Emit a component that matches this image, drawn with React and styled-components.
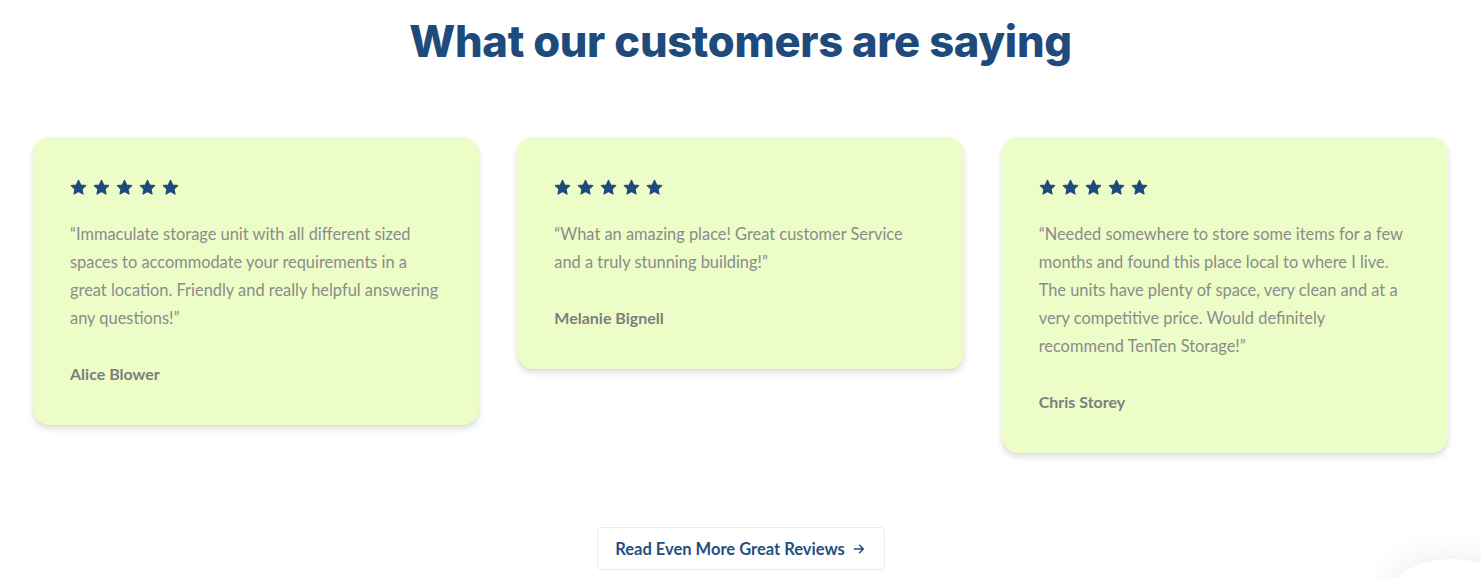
import styled, { createGlobalStyle } from "styled-components"

const GlobalStyle = createGlobalStyle`
    html, body {
        margin: 0;
        padding: 0;
        background: #ffffff;
    }
    body {
        font-family: Lato, "Open Sans", sans-serif;
        overflow: hidden;
    }
`

const Section = styled.section`
    width: 100%;
    height: 579px;
    display: flex;
    flex-direction: column;
    align-items: center;
    padding-top: 14px;
    box-sizing: border-box;
    position: relative;
    overflow: hidden;
`

const Title = styled.h2`
    margin: 0;
    font-family: Inter, "Open Sans", sans-serif;
    font-weight: 800;
    font-size: 43.5px;
    line-height: 54px;
    letter-spacing: -0.3px;
    color: #1e4b7b;
`

const Cards = styled.div`
    width: 100%;
    box-sizing: border-box;
    padding: 0 33px;
    margin-top: 69px;
    display: grid;
    grid-template-columns: repeat(3, 1fr);
    gap: 38px;
    align-items: start;
`

const Card = styled.div`
    background: #edfdc7;
    border-radius: 16px;
    padding: 41px 37px 37px;
    box-shadow: 0 4px 6px rgba(0, 0, 0, 0.12), 0 1px 2px rgba(0, 0, 0, 0.05);
`

const Stars = styled.div`
    display: flex;
    gap: 6px;
    height: 18px;
    align-items: center;
`

const Quote = styled.p`
    margin: 24px 0 0;
    font-size: 16.4px;
    line-height: 28px;
    color: #8b8b8b;
`

const Line = styled.span`
    display: block;
    white-space: nowrap;
`

const Name = styled.div`
    margin-top: 28px;
    font-size: 16px;
    line-height: 28px;
    font-weight: 700;
    color: #7e7e7e;
`

const Button = styled.a`
    margin-top: 74px;
    width: 288px;
    height: 43px;
    box-sizing: border-box;
    border: 1px solid #ebebeb;
    border-radius: 4px;
    display: flex;
    align-items: center;
    justify-content: center;
    gap: 7px;
    font-size: 16.5px;
    font-weight: 700;
    color: #24507f;
    text-decoration: none;
    cursor: pointer;
`

// chat launcher peeking in from the bottom-right corner
const Widget = styled.div`
    position: absolute;
    right: -30px;
    bottom: -50px;
    width: 120px;
    height: 70px;
    border-radius: 50%;
    box-shadow: 0 0 36px rgba(0, 0, 0, 0.09);
    background: #ffffff;
`

const Star = () => (
    <svg width="17" height="17" viewBox="0 0 24 24">
        <path
            d="M12 1.8l3.1 6.6 7.1.9-5.2 4.9 1.4 7.1L12 17.8l-6.4 3.5 1.4-7.1-5.2-4.9 7.1-.9z"
            fill="#1e4a7c"
            stroke="#1e4a7c"
            strokeWidth="1.6"
            strokeLinejoin="round"
        />
    </svg>
)

const Arrow = () => (
    <svg width="14" height="14" viewBox="0 0 24 24" fill="none" stroke="#24507f" strokeWidth="2.6" strokeLinecap="round" strokeLinejoin="round">
        <path d="M4 12h15M13 5.5l6.5 6.5-6.5 6.5" />
    </svg>
)

const reviews = [
    {
        name: "Alice Blower",
        lines: [
            "\u201cImmaculate storage unit with all different sized",
            "spaces to accommodate your requirements in a",
            "great location. Friendly and really helpful answering",
            "any questions!\u201d",
        ],
    },
    {
        name: "Melanie Bignell",
        lines: [
            "\u201cWhat an amazing place! Great customer Service",
            "and a truly stunning building!\u201d",
        ],
    },
    {
        name: "Chris Storey",
        lines: [
            "\u201cNeeded somewhere to store some items for a few",
            "months and found this place local to where I live.",
            "The units have plenty of space, very clean and at a",
            "very competitive price. Would definitely",
            "recommend TenTen Storage!\u201d",
        ],
    },
]

const App = () => {
    return (
        <>
            <GlobalStyle />
            <Section>
                <Title>What our customers are saying</Title>
                <Cards>
                    {reviews.map((r) => (
                        <Card key={r.name}>
                            <Stars>
                                {[0, 1, 2, 3, 4].map((i) => (
                                    <Star key={i} />
                                ))}
                            </Stars>
                            <Quote>
                                {r.lines.map((l) => (
                                    <Line key={l}>{l}</Line>
                                ))}
                            </Quote>
                            <Name>{r.name}</Name>
                        </Card>
                    ))}
                </Cards>
                <Button>
                    Read Even More Great Reviews <Arrow />
                </Button>
                <Widget />
            </Section>
        </>
    )
}

export default App
